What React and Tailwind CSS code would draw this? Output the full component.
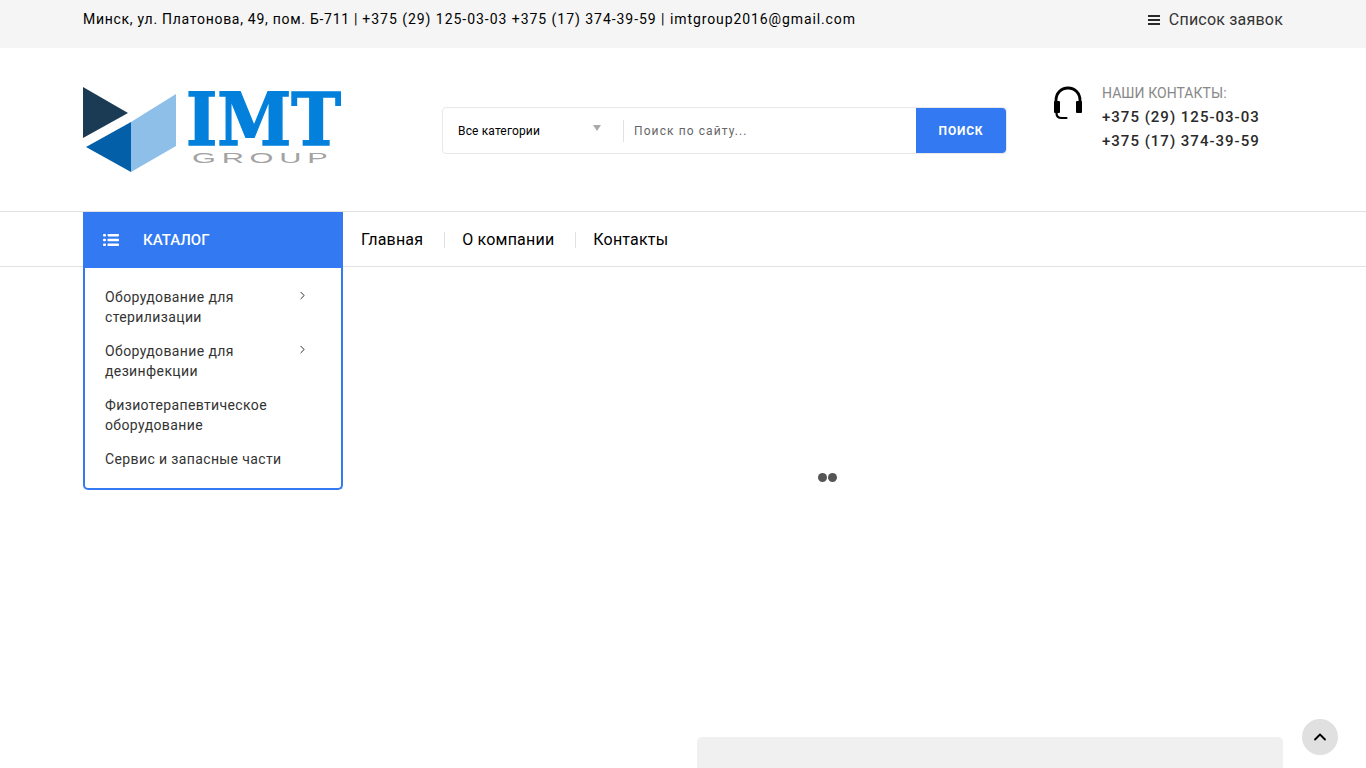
import React from "react";
import { ChevronRight, ChevronUp } from "lucide-react";

function Logo() {
  return (
    <svg width="260" height="86" viewBox="0 0 260 86" className="block overflow-visible">
      <polygon points="0,0 45,26 0,51" fill="#1b3a54" />
      <polygon points="3,60 48,35 48,85" fill="#0360a8" />
      <polygon points="48,35 93,7 93,59 48,85" fill="#8dbfe8" />
      <text x="103" y="57.5" fontFamily="'DejaVu Serif', serif" fontWeight="700" fontSize="72" fill="#0280dc" stroke="#0280dc" strokeWidth="1.5" textLength="155" lengthAdjust="spacingAndGlyphs">IMT</text>
      <text transform="translate(109,76) scale(2.2,1)" fontFamily="'Liberation Sans', sans-serif" fontSize="14" letterSpacing="2.6" fill="#a3a3a3">GROUP</text>
    </svg>
  );
}

function Headset() {
  return (
    <svg width="30" height="34" viewBox="0 0 30 34" fill="none" className="block">
      <path d="M3 20V14.5C3 7 8 2 15 2s12 5 12 12.5V20" stroke="#000" strokeWidth="2.8" />
      <rect x="1" y="15" width="6" height="12" rx="1" fill="#000" />
      <rect x="23" y="15" width="6" height="12" rx="1" fill="#000" />
      <path d="M3.5 27c0 3.5 2 5 5 5h5" stroke="#000" strokeWidth="2.2" strokeLinecap="round" />
    </svg>
  );
}

function ListIcon() {
  return (
    <svg width="16" height="14" viewBox="0 0 16 14" fill="#fff" className="block">
      <rect x="0" y="1" width="3" height="2.4" rx="1" />
      <rect x="0" y="5.8" width="3" height="2.4" rx="1" />
      <rect x="0" y="10.6" width="3" height="2.4" rx="1" />
      <rect x="4.5" y="1" width="11.5" height="2.4" rx="0.8" />
      <rect x="4.5" y="5.8" width="11.5" height="2.4" rx="0.8" />
      <rect x="4.5" y="10.6" width="11.5" height="2.4" rx="0.8" />
    </svg>
  );
}

function BarsIcon() {
  return (
    <svg width="12" height="10" viewBox="0 0 12 10" fill="#2a2a2a" className="block">
      <rect y="0" width="12" height="2" />
      <rect y="4" width="12" height="2" />
      <rect y="8" width="12" height="2" />
    </svg>
  );
}

const menu = [
  ["Оборудование для", "стерилизации", true],
  ["Оборудование для", "дезинфекции", true],
  ["Физиотерапевтическое", "оборудование", false],
  ["Сервис и запасные части", null, false],
];

export default function App() {
  return (
    <div className="h-[768px] overflow-hidden bg-white font-['Roboto',sans-serif] relative">
      <div className="h-12 bg-[#f5f5f5]">
        <div className="w-[1200px] mx-auto flex justify-between">
          <div className="pt-[9px] text-sm leading-5 tracking-[0.72px] text-black">
            Минск, ул. Платонова, 49, пом. Б-711 | <span className="tracking-[0.96px]">+375 (29) 125-03-03 +375 (17) 374-39-59 | </span><span className="tracking-[0.9px]">imtgroup2016@gmail.com</span>
          </div>
          <div className="pt-[10px] flex items-center text-base leading-5 tracking-[0.2px] text-[#333] gap-[9px]">
            <BarsIcon />
            <span>Список заявок</span>
          </div>
        </div>
      </div>

      <div className="h-[164px] border-b border-[#e1e1e1]">
        <div className="w-[1200px] mx-auto flex">
          <div className="w-[359px] pt-[39px]"><Logo /></div>
          <div className="pt-[59px]">
            <div className="w-[565px] h-[47px] border border-[#e8e8e8] rounded flex items-stretch">
              <div className="w-[180px] flex items-center pl-[15px] text-xs tracking-[0.15px] text-black relative">
                <span>Все категории</span>
                <span className="absolute left-[150px] top-[17px] w-0 h-0 border-l-[4px] border-r-[4px] border-t-[6px] border-l-transparent border-r-transparent border-t-[#aaa]"></span>
              </div>
              <div className="w-px h-[22px] self-center bg-[#e1e1e1]"></div>
              <div className="flex-1 flex items-center pl-[10px] text-xs tracking-[1.1px] text-[#666]">Поиск по сайту...</div>
              <div className="w-[90px] bg-[#3279f2] rounded-r flex items-center justify-center text-xs font-bold tracking-[0.8px] text-white">ПОИСК</div>
            </div>
          </div>
          <div className="flex pl-[46px] pt-[38px]">
            <Headset />
            <div className="pl-[19px] -mt-[5px]">
              <div className="text-sm leading-6 tracking-[0.05px] text-[#888]">НАШИ КОНТАКТЫ:</div>
              <div className="text-[15px] leading-6 font-medium tracking-[1px] text-[#2a2a2a]">+375 (29) 125-03-03</div>
              <div className="text-[15px] leading-6 font-medium tracking-[1px] text-[#2a2a2a]">+375 (17) 374-39-59</div>
            </div>
          </div>
        </div>
      </div>

      <div className="h-[55px] border-b border-[#e1e1e1]">
        <div className="w-[1200px] mx-auto flex items-start">
          <div className="w-[260px] h-[56px] bg-[#3279f2] flex items-center pl-5 text-white relative z-20">
            <ListIcon />
            <span className="ml-6 text-[15px] font-medium">КАТАЛОГ</span>
          </div>
          <div className="flex items-center h-[56px] text-base tracking-[0.2px] text-black">
            <span className="pl-[18px] pr-[21px]">Главная</span>
            <span className="w-px h-4 bg-[#e1e1e1]"></span>
            <span className="pl-[17px] pr-[21px]">О компании</span>
            <span className="w-px h-4 bg-[#e1e1e1]"></span>
            <span className="pl-[17px]">Контакты</span>
          </div>
        </div>
      </div>

      <div className="w-[1200px] mx-auto flex items-start">
        <div className="w-[260px] h-[223px] border-2 border-t-0 border-[#3279f2] rounded-b-[5px] pt-[20px] pl-5 relative z-10 bg-white">
          {menu.map(([a, b, arrow]) => (
            <div key={a} className="relative text-sm leading-5 tracking-[0.38px] text-[#333] mb-[14px]">
              <div>{a}</div>
              {b && <div>{b}</div>}
              {arrow && <ChevronRight size={13} strokeWidth={1.6} className="absolute left-[191px] top-[2px] text-[#111]" />}
            </div>
          ))}
        </div>
        <div className="flex-1 relative h-[502px]">
          <div className="absolute left-[475px] top-[206px] flex gap-px">
            <span className="w-[9px] h-[9px] rounded-full bg-[#555]"></span>
            <span className="w-[9px] h-[9px] rounded-full bg-[#555]"></span>
          </div>
          <div className="absolute right-0 top-[470px] w-[586px] h-[60px] rounded-t-[5px] bg-[#f0f0f0]"></div>
        </div>
      </div>

      <div className="fixed left-[1302px] top-[719px] w-9 h-9 rounded-full bg-[#e0e0e0] flex items-center justify-center">
        <ChevronUp size={20} strokeWidth={2.2} className="text-black" />
      </div>
    </div>
  );
}
